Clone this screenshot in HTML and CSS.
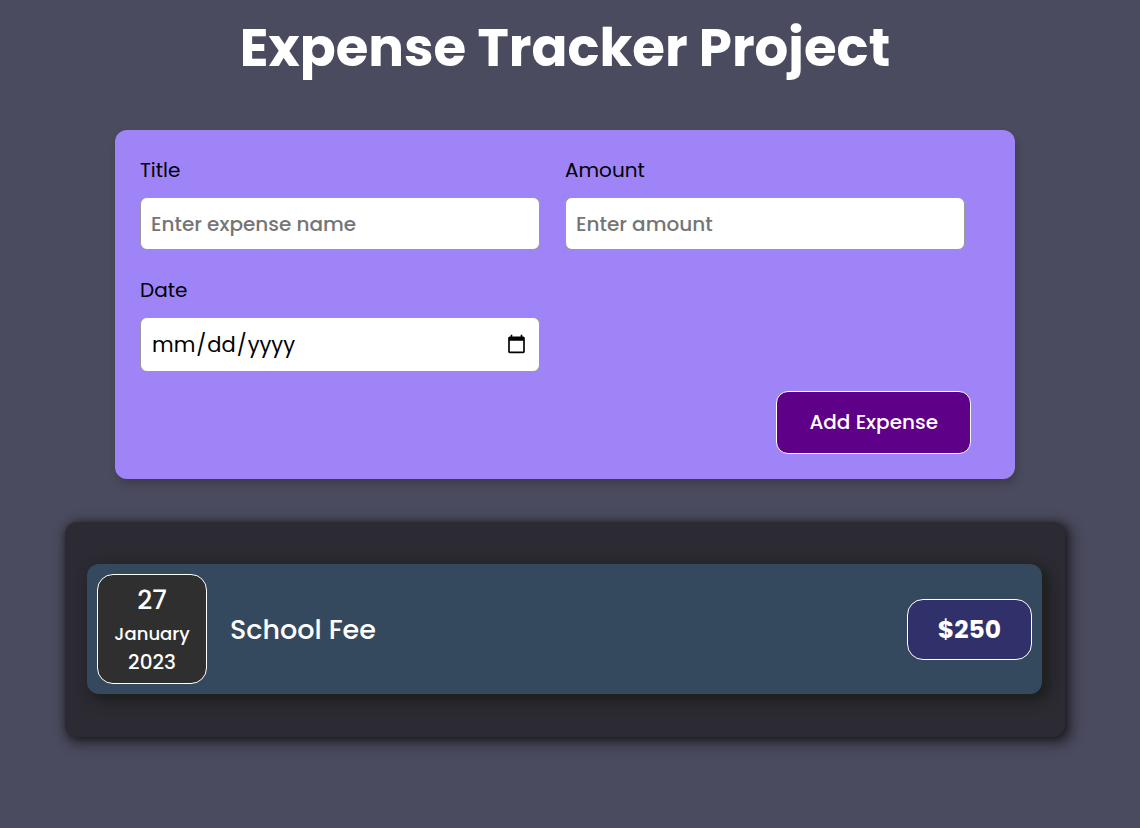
FILE: index.html
```html
<!DOCTYPE html>
<html lang="en">
<head>
  <meta charset="utf-8">
  <meta name="viewport" content="width=device-width, initial-scale=1">
  <title>Expense Tracker Project</title>
  <link rel="stylesheet" href="styles.css">
</head>
<body>
  <main class="page">
    <h1 class="page-title">Expense Tracker Project</h1>

    <form class="expense-form">
      <div class="fields">
        <div class="field">
          <label for="title">Title</label>
          <input id="title" type="text" placeholder="Enter expense name">
        </div>
        <div class="field">
          <label for="amount">Amount</label>
          <input id="amount" type="number" placeholder="Enter amount">
        </div>
        <div class="field">
          <label for="date">Date</label>
          <input id="date" class="date-input" type="date">
        </div>
      </div>
      <div class="actions">
        <button class="add-button" type="submit">Add Expense</button>
      </div>
    </form>

    <ul class="expenses">
      <li class="expense">
        <time class="expense-date" datetime="2023-01-27">
          <span class="day">27</span>
          <span class="month">January</span>
          <span class="year">2023</span>
        </time>
        <h2 class="expense-title">School Fee</h2>
        <div class="expense-price">$250</div>
      </li>
    </ul>
  </main>
</body>
</html>
```

FILE: styles.css
```css
* {
  box-sizing: border-box;
}

body {
  margin: 0;
  min-height: 100vh;
  background: #4b4b5f;
  color: #fff;
  font-family: Poppins, Inter, "Open Sans", sans-serif;
}

input,
button {
  font: inherit;
}

.page {
  display: flex;
  flex-direction: column;
  align-items: center;
  padding: 8px 10px 72px 0;
}

.page-title {
  margin: 0 0 42px;
  font-size: 53px;
  line-height: 80px;
  font-weight: 700;
  text-align: center;
}

.expense-form {
  width: calc(100% - 40px);
  max-width: 900px;
  padding: 25px 44px 25px 25px;
  border-radius: 12px;
  background: #9f84f7;
  box-shadow: 2px 5px 8px rgba(0, 0, 0, 0.2);
}

.fields {
  display: grid;
  grid-template-columns: repeat(2, minmax(0, 1fr));
  gap: 25px;
  padding-right: 6px;
}

.field {
  display: flex;
  flex-direction: column;
  gap: 12px;
}

.field label {
  color: #000;
  font-size: 20px;
  line-height: 30px;
  font-weight: 400;
}

.field input {
  width: 100%;
  height: 53px;
  padding: 10px;
  border: 1px solid #999;
  border-radius: 7px;
  background: #fff;
  color: #000;
  font-size: 20px;
}

.field .date-input {
  height: 55px;
  font-size: 21px;
}

.field input::placeholder {
  color: #757575;
  font-weight: 500;
}

.actions {
  display: flex;
  justify-content: flex-end;
  margin-top: 19px;
}

.add-button {
  padding: 16px 32px;
  border: 1px solid #fff;
  border-radius: 12px;
  background: #5e0088;
  color: #fff;
  font-size: 20px;
  line-height: 29px;
  font-weight: 500;
  cursor: pointer;
}

.expenses {
  width: calc(100% - 40px);
  max-width: 1000px;
  margin: 43px 0 0;
  padding: 42px 23px 43px 22px;
  border-radius: 12px;
  background: #2c2b33;
  box-shadow:
    2px 2px 8px rgba(0, 0, 0, 0.6),
    4px 4px 12px 6px rgba(0, 0, 0, 0.25);
  list-style: none;
}

.expense {
  display: flex;
  align-items: center;
  gap: 23px;
  padding: 10px;
  border-radius: 12px;
  background: #35495e;
  box-shadow: 5px 5px 12px 3px #1e1f20;
}

.expense-date {
  display: flex;
  flex-direction: column;
  align-items: center;
  flex: none;
  width: 110px;
  padding: 6px 0 7px;
  border: 1px solid #fff;
  border-radius: 16px;
  background: #2f2f2f;
  font-weight: 500;
}

.day {
  font-size: 26px;
  line-height: 39px;
}

.month {
  font-size: 18px;
  line-height: 28px;
}

.year {
  font-size: 20px;
  line-height: 28px;
}

.expense-title {
  flex: 1;
  margin: 0;
  font-size: 27px;
  line-height: 39px;
  font-weight: 500;
}

.expense-price {
  flex: none;
  padding: 10px 30px;
  border: 1px solid #fff;
  border-radius: 16px;
  background: #30306a;
  font-size: 25px;
  line-height: 39px;
  font-weight: 700;
}
```
